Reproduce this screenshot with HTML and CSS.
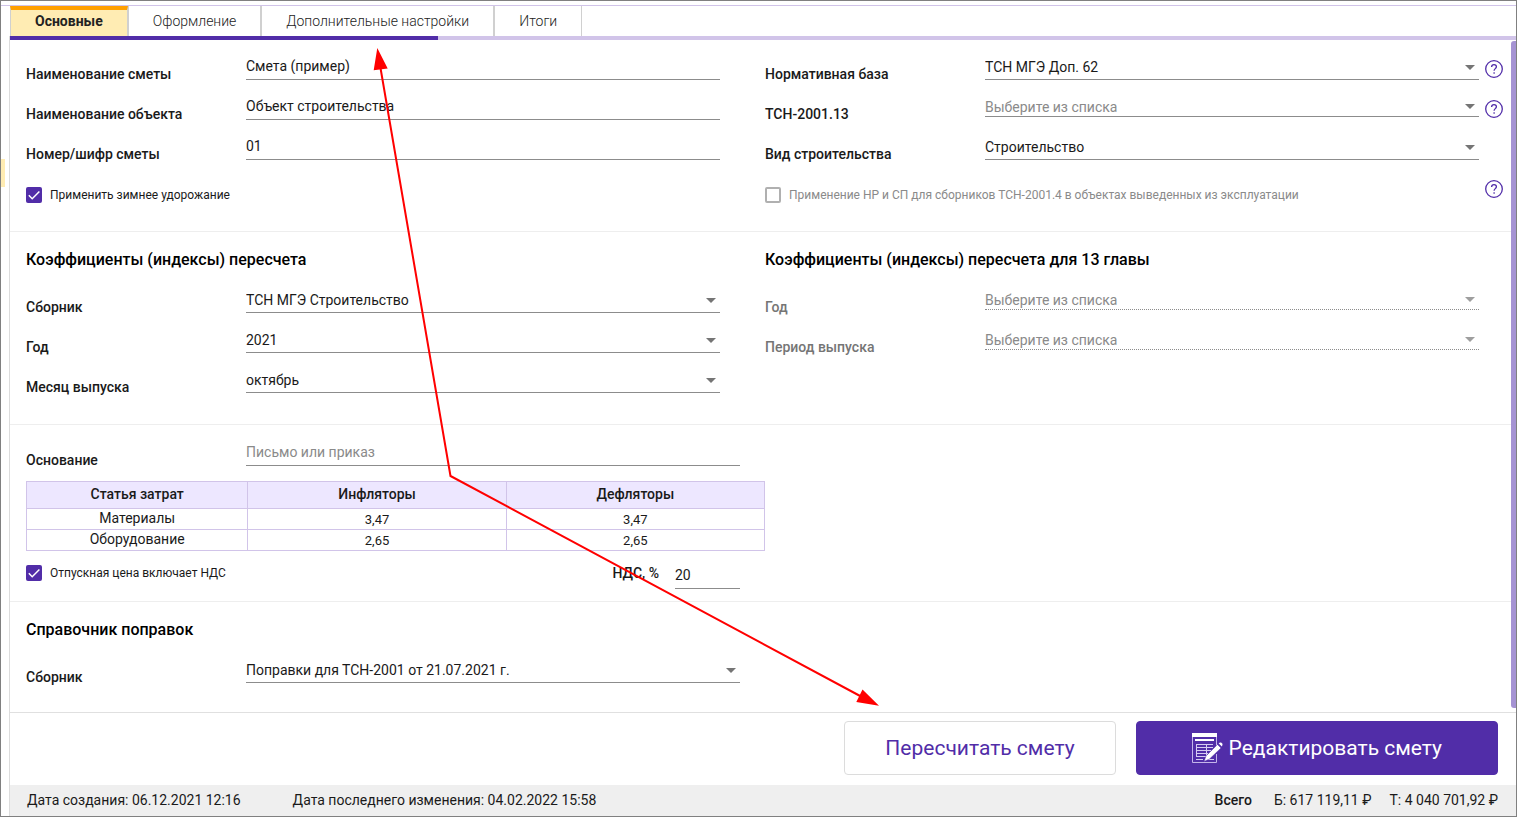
FILE: index.html
```html
<!DOCTYPE html>
<html lang="ru">
<head>
<meta charset="utf-8">
<title>Смета (пример)</title>
<link rel="stylesheet" href="styles.css">
</head>
<body>
<div class="app">
  <nav class="tabs" aria-label="Разделы">
    <button class="tab tab-active" type="button">Основные</button>
    <button class="tab" type="button">Оформление</button>
    <button class="tab" type="button">Дополнительные настройки</button>
    <button class="tab" type="button">Итоги</button>
  </nav>
  <div class="side"><span class="side-mark"></span></div>
  <div class="page">
    <div class="progress"><div class="progress-fill"></div></div>
    <main class="content">
      <section class="section section-first">
        <div class="column">
          <div class="row">
            <label class="label" for="name">Наименование сметы</label>
            <div class="field"><input class="input" id="name" type="text" value="Смета (пример)"></div>
          </div>
          <div class="row">
            <label class="label" for="object">Наименование объекта</label>
            <div class="field"><input class="input" id="object" type="text" value="Объект строительства"></div>
          </div>
          <div class="row">
            <label class="label" for="code">Номер/шифр сметы</label>
            <div class="field"><input class="input" id="code" type="text" value="01"></div>
          </div>
          <div class="row">
            <label class="check"><input class="box" type="checkbox" checked>Применить зимнее удорожание</label>
          </div>
        </div>
        <div class="column column-right">
          <div class="row">
            <label class="label" for="base">Нормативная база</label>
            <div class="field field-select"><select class="input" id="base"><option>ТСН МГЭ Доп. 62</option></select></div>
            <button class="help" type="button" aria-label="Справка"><svg viewBox="0 0 18 18"><circle cx="9" cy="9" r="8.3"/><path d="M6.6 6.9C6.6 5.4 7.6 4.6 9 4.6s2.4.9 2.4 2.2c0 1.700-2.300 2-2.300 3.900M9.100 12.300v1.400"/></svg></button>
          </div>
          <div class="row">
            <label class="label" for="tsn13">ТСН-2001.13</label>
            <div class="field field-select field-compact"><select class="input input-empty" id="tsn13"><option>Выберите из списка</option></select></div>
            <button class="help" type="button" aria-label="Справка"><svg viewBox="0 0 18 18"><circle cx="9" cy="9" r="8.3"/><path d="M6.6 6.9C6.6 5.4 7.6 4.6 9 4.6s2.4.9 2.4 2.2c0 1.700-2.300 2-2.300 3.900M9.100 12.300v1.400"/></svg></button>
          </div>
          <div class="row">
            <label class="label" for="kind">Вид строительства</label>
            <div class="field field-select"><select class="input" id="kind"><option>Строительство</option></select></div>
          </div>
          <div class="row">
            <label class="check check-off"><input class="box" type="checkbox" disabled>Применение НР и СП для сборников ТСН-2001.4 в объектах выведенных из эксплуатации</label>
            <button class="help" type="button" aria-label="Справка"><svg viewBox="0 0 18 18"><circle cx="9" cy="9" r="8.3"/><path d="M6.6 6.9C6.6 5.4 7.6 4.6 9 4.6s2.4.9 2.4 2.2c0 1.700-2.300 2-2.300 3.900M9.100 12.300v1.400"/></svg></button>
          </div>
        </div>
      </section>

      <section class="section">
        <div class="column">
          <h2 class="heading">Коэффициенты (индексы) пересчета</h2>
          <div class="row">
            <label class="label" for="book">Сборник</label>
            <div class="field field-select"><select class="input" id="book"><option>ТСН МГЭ Строительство</option></select></div>
          </div>
          <div class="row">
            <label class="label" for="year">Год</label>
            <div class="field field-select"><select class="input" id="year"><option>2021</option></select></div>
          </div>
          <div class="row">
            <label class="label" for="month">Месяц выпуска</label>
            <div class="field field-select"><select class="input" id="month"><option>октябрь</option></select></div>
          </div>
        </div>
        <div class="column column-right">
          <h2 class="heading">Коэффициенты (индексы) пересчета для 13 главы</h2>
          <div class="row">
            <label class="label label-off" for="year13">Год</label>
            <div class="field field-select field-compact field-off"><select class="input input-empty" id="year13" disabled><option>Выберите из списка</option></select></div>
          </div>
          <div class="row">
            <label class="label label-off" for="period13">Период выпуска</label>
            <div class="field field-select field-compact field-off"><select class="input input-empty" id="period13" disabled><option>Выберите из списка</option></select></div>
          </div>
        </div>
      </section>

      <section class="section section-basis">
        <div class="column column-wide">
          <div class="row">
            <label class="label" for="basis">Основание</label>
            <div class="field"><input class="input" id="basis" type="text" placeholder="Письмо или приказ"></div>
          </div>
          <table class="costs">
            <thead><tr><th class="item">Статья затрат</th><th>Инфляторы</th><th>Дефляторы</th></tr></thead>
            <tbody>
              <tr><td class="item">Материалы</td><td>3,47</td><td>3,47</td></tr>
              <tr><td class="item">Оборудование</td><td>2,65</td><td>2,65</td></tr>
            </tbody>
          </table>
          <div class="vat">
            <label class="check"><input class="box" type="checkbox" checked>Отпускная цена включает НДС</label>
            <label class="vat-label" for="vat">НДС, %</label>
            <input class="input vat-input" id="vat" type="text" value="20">
          </div>
        </div>
      </section>

      <section class="section section-last">
        <div class="column column-wide">
          <h2 class="heading">Справочник поправок</h2>
          <div class="row">
            <label class="label" for="fixes">Сборник</label>
            <div class="field field-select"><select class="input" id="fixes"><option>Поправки для ТСН-2001 от 21.07.2021 г.</option></select></div>
          </div>
        </div>
      </section>
      <div class="scrollbar"></div>
    </main>

    <div class="actions">
      <button class="button" type="button">Пересчитать смету</button>
      <button class="button button-main" type="button">
        <svg class="edit-icon" viewBox="0 0 32 32"><path class="fill" d="M0 1h25v4H0z"/><path class="frame" d="M.5 5v25.500h24V22M24.500 5v9"/><path class="bar" d="M3 8h19"/><path class="lines" d="M4 12.500h17M4 15.500h17M4 18.500h15M4 21.500h12M4 24.500h10M4.500 12v13M14.500 12v13M4 27.500h7M16 27.500h6"/><path class="pen" d="M12 29.500l2-5.500L25.500 12.500l3.500 3.500L17.500 27z"/><path class="pen" d="M26.500 11.500l1.500-1.200c1-.8 3.500 1.500 2.700 2.700L29.800 14.800z"/></svg>
        Редактировать смету
      </button>
    </div>

    <footer class="status">
      <span class="created">Дата создания: 06.12.2021 12:16</span>
      <span>Дата последнего изменения: 04.02.2022 15:58</span>
      <strong class="total">Всего</strong>
      <span class="sum">Б: 617 119,11 ₽</span>
      <span>Т: 4 040 701,92 ₽</span>
    </footer>
  </div>
  <svg class="pointer" width="900" height="720" viewBox="0 0 900 720" aria-hidden="true">
    <path class="pointer-line" d="M380.500 68L450.500 476L862 697"/>
    <path class="pointer-head" d="M377.300 48L373.700 70.300L387.700 68.500zM879 705.700L856.300 702L862.500 689.500z"/>
  </svg>
</div>
</body>
</html>
```
FILE: styles.css
```css
* { box-sizing: border-box; }

body {
  margin: 0;
  font-family: Roboto, "Noto Sans", sans-serif;
  font-size: 14px;
  line-height: 16px;
  color: #1a1a1a;
  background: #fff;
}

button, input, select { font: inherit; color: inherit; }
button { cursor: pointer; }

.app {
  position: relative;
  min-height: 100vh;
  display: grid;
  grid-template-columns: 9px 1fr;
  grid-template-rows: auto 1fr;
  border: 1px solid #808080;
}

.tabs {
  grid-column: 1 / -1;
  display: flex;
  height: 31px;
  margin-top: 4px;
  padding-left: 9px;
  border-top: 1px solid #d1c4e9;
}

.tab {
  padding: 0 24px;
  border: solid #d0d0d0;
  border-width: 0 1px;
  background: #fff;
  font-weight: 300;
  color: #222;
}

.tab-active {
  padding-bottom: 4px;
  border-color: #ffecb3 #d0d0d0;
  border-top: 4px solid #ffa000;
  background: #ffecb3;
  font-weight: 700;
}

.side { border-right: 1px solid #dcdcdc; }

.side-mark {
  display: block;
  width: 4px;
  height: 28px;
  margin-top: 123px;
  background: #ffecb3;
}

.page {
  min-width: 0;
  display: flex;
  flex-direction: column;
}

.progress { height: 4px; background: #d1c4e9; }
.progress-fill { width: 428px; height: 4px; background: #512da8; }

.content {
  position: relative;
  flex: 1;
  border-bottom: 1px solid #e0e0e0;
}

.scrollbar {
  position: absolute;
  top: 1px;
  right: 0;
  bottom: 4px;
  width: 5px;
  border-radius: 3px 0 0 3px;
  background: #a593d3;
}

.section {
  display: grid;
  grid-template-columns: 1fr 1fr;
  padding: 0 12px 27px 16px;
  border-bottom: 1px solid #eee;
}

.section-first { padding-top: 4px; }
.section-basis { padding-top: 5px; padding-bottom: 12px; }
.section-last { padding-bottom: 25px; border-bottom: 0; }

.column { padding-right: 45px; }
.column-right { padding-right: 25px; }
.column-wide { padding-right: 25px; }

.heading {
  margin: 0;
  padding: 19px 0 8px;
  font-size: 16px;
  line-height: 18px;
  font-weight: 500;
  color: #000;
}

.row {
  position: relative;
  display: flex;
  height: 40px;
}

.label {
  width: 220px;
  padding-top: 22px;
  font-weight: 500;
}

.label-off { color: #757575; }

.field {
  position: relative;
  flex: 1;
  height: 28px;
  margin-top: 8px;
}

.input {
  display: block;
  width: 100%;
  height: 28px;
  margin: 0;
  padding: 1px 0 0;
  border: 0;
  border-bottom: 1px solid #8c8c8c;
  border-radius: 0;
  outline: 0;
  appearance: none;
  background: transparent;
  opacity: 1;
}

.input::placeholder { color: #8a8a8a; opacity: 1; }
.input-empty { color: #8a8a8a; }

.field-select .input { padding-top: 3px; }

.field-select::after {
  content: "";
  position: absolute;
  top: 13px;
  right: 4px;
  border: 5px solid transparent;
  border-top-color: #757575;
  border-bottom-width: 0;
  pointer-events: none;
}

.field-compact .input { height: 25px; padding-top: 6px; }
.field-compact::after { top: 12px; }
.field-off .input { border-bottom-style: dotted; }
.field-off::after { border-top-color: #9e9e9e; }

.help {
  position: absolute;
  top: 16px;
  right: -24px;
  width: 18px;
  height: 18px;
  padding: 0;
  border: 0;
  background: none;
}

.help svg {
  display: block;
  fill: none;
  stroke: #512da8;
  stroke-width: 1.300;
}

.check {
  display: flex;
  align-items: center;
  gap: 8px;
  padding-top: 22px;
  font-size: 12px;
}

.check-off { color: #8a8a8a; }

.box {
  appearance: none;
  flex: none;
  width: 16px;
  height: 16px;
  margin: 0;
  border: 2px solid #b0b0b0;
  border-radius: 2px;
}

.box:checked {
  border: 0;
  background: #512da8 url("data:image/svg+xml,%3Csvg xmlns='http://www.w3.org/2000/svg' viewBox='0 0 16 16'%3E%3Cpath d='M2.800 8.300l3.400 3.400 7.200-7.200' fill='none' stroke='white' stroke-width='1.500'/%3E%3C/svg%3E") center / 16px 16px;
}

.costs {
  width: calc(100% + 25px);
  margin-top: 11px;
  border-collapse: collapse;
  table-layout: fixed;
  text-align: center;
}

.costs th, .costs td {
  height: 21px;
  padding: 1px 0 0;
  border: 1px solid #d1c4e9;
  font-size: 13px;
}

.costs th {
  height: 27px;
  padding: 0 0 2px;
  background: #ede7ff;
  font-size: 14px;
  font-weight: 500;
}

.costs .item { width: 30%; }
.costs td.item { padding: 0 0 3px; font-size: 14px; }

.vat {
  display: flex;
  align-items: flex-start;
  height: 38px;
}

.vat .check { padding-top: 14px; }
.vat-label { margin: 14px 16px 0 auto; font-weight: 500; }
.vat-input { width: 65px; margin-top: 10px; }

.actions {
  display: flex;
  justify-content: flex-end;
  gap: 20px;
  padding: 8px 18px 10px;
}

.button {
  display: flex;
  align-items: center;
  justify-content: center;
  height: 54px;
  padding: 0 40px;
  border: 1px solid #dcdcdc;
  border-radius: 4px;
  background: #fff;
  color: #512da8;
  font-size: 21px;
}

.button-main {
  gap: 5px;
  padding: 0 55px;
  border-color: #512da8;
  background: #512da8;
  color: #fff;
}

.edit-icon { width: 32px; height: 32px; fill: none; stroke: #fff; }
.edit-icon .fill { fill: #fff; stroke: none; }
.edit-icon .frame { stroke: #c4b5ea; }
.edit-icon .bar { stroke-width: 2; }
.edit-icon .lines { stroke: #d6cbf2; }
.edit-icon .pen { fill: #fff; stroke: #512da8; stroke-width: 0.500; }

.status {
  display: flex;
  align-items: center;
  height: 31px;
  padding: 0 18px 1px 17px;
  background: #efefef;
}

.created { margin-right: 52px; }
.total { margin-left: auto; font-weight: 500; }
.sum { margin: 0 18px 0 22px; }

.pointer {
  position: absolute;
  top: -1px;
  left: -1px;
  pointer-events: none;
}

.pointer-line { fill: none; stroke: #f00; stroke-width: 2; }
.pointer-head { fill: #f00; }
```
